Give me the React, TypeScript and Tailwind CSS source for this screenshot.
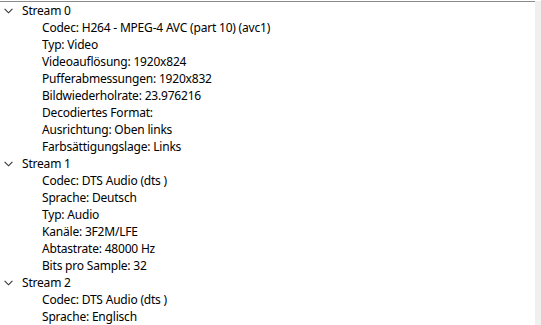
import React from "react";

const streams = [
  {
    name: "Stream 0",
    items: [
      "Codec: H264 - MPEG-4 AVC (part 10) (avc1)",
      "Typ: Video",
      "Videoauflösung: 1920x824",
      "Pufferabmessungen: 1920x832",
      "Bildwiederholrate: 23.976216",
      "Decodiertes Format:",
      "Ausrichtung: Oben links",
      "Farbsättigungslage: Links",
    ],
  },
  {
    name: "Stream 1",
    items: [
      "Codec: DTS Audio (dts )",
      "Sprache: Deutsch",
      "Typ: Audio",
      "Kanäle: 3F2M/LFE",
      "Abtastrate: 48000 Hz",
      "Bits pro Sample: 32",
    ],
  },
  {
    name: "Stream 2",
    items: ["Codec: DTS Audio (dts )", "Sprache: Englisch"],
  },
];

function Chevron() {
  return (
    <svg width="9" height="6" viewBox="0 0 9 6" className="block">
      <path d="M0.6 0.9 L4.5 4.8 L8.4 0.9" fill="none" stroke="#333" strokeWidth="1.1" />
    </svg>
  );
}

export default function App() {
  return (
    <div className="w-[541px] h-[325px] bg-white overflow-hidden" style={{ fontFamily: '"Noto Sans", sans-serif' }}>
      <div className="h-[1px] bg-white" />
      <div className="flex h-[324px]">
        <div className="flex-1 border-t border-[#8a8a8a] text-[12px] text-[#000] leading-[17px] tracking-[-0.2px]">
          {streams.map((s) => (
            <div key={s.name}>
              <div className="flex items-center h-[17px]">
                <div className="w-[22px] pl-[4px] flex items-center"><Chevron /></div>
                <span>{s.name}</span>
              </div>
              {s.items.map((it) => (
                <div key={it} className="h-[17px] pl-[42px] whitespace-nowrap">{it}</div>
              ))}
            </div>
          ))}
        </div>
        <div className="w-[6px] bg-[#f0f0f0]" />
      </div>
    </div>
  );
}
